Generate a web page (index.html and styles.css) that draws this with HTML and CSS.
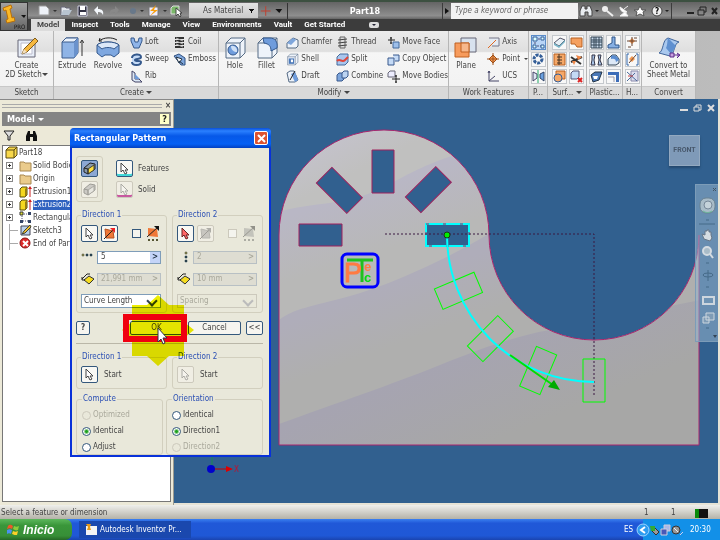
FILE: index.html
```html
<!DOCTYPE html>
<html lang="en">
<head>
    <meta charset="utf-8">
    <title>Part18</title>
    <link rel="stylesheet" href="styles.css">
</head>
<body>
    <!-- shared icons -->
    <svg class="sprite" aria-hidden="true">
        <symbol id="arrow" viewBox="0 0 17 17"><path d="M5 3v9l2-2 2 4 2-1-2-3h3z" fill="#fff" stroke="#444"/></symbol>
        <symbol id="arrow-red" viewBox="0 0 17 17"><path d="M5 3v9l2-2 2 4 2-1-2-3h3z" fill="#f66" stroke="#622"/></symbol>
        <symbol id="flip" viewBox="0 0 17 17"><path d="M4 4l8 2 1 7-8 0z" fill="#f07838" stroke="#b45020"/><path d="M3 14L12 5" stroke="#222"/><path d="M9 3h5v5z" fill="#e22"/></symbol>
        <symbol id="midplane" viewBox="0 0 17 17"><path d="M4 3l9 1 1 8-10-1z" fill="#f07838"/><path d="M3 12L14 2" stroke="#222"/><path d="M10 1h5v5z" fill="#111"/><path d="M4 15h2M8 15h2M12 15h2" stroke="#553" stroke-width="2"/></symbol>
        <symbol id="solid" viewBox="0 0 17 17"><path d="M3 8l6-5 5 1v5l-7 5-4-2z" fill="#8899aa" stroke="#222"/><path d="M7 9l6-4v5l-6 4z" fill="#ffe040" stroke="#443"/><path d="M3 8l4 1v5" fill="none" stroke="#222"/></symbol>
        <symbol id="diamond" viewBox="0 0 14 14"><path d="M3 8l5-4 5 3-5 5z" fill="#f5dc20" stroke="#333"/><path d="M1 7l5-5M1 5v3h3M6 2h3" fill="none" stroke="#222"/></symbol>
        <symbol id="cube-y" viewBox="0 0 13 13"><path d="M1 4l3-3h8v8l-3 3H1z" fill="#f8d84a" stroke="#5a4a10"/><path d="M1 4h8v8M9 4l3-3" fill="none" stroke="#5a4a10"/></symbol>
        <symbol id="folder" viewBox="0 0 13 13"><path d="M1 3h4l1 1h6v8H1z" fill="#eacb8c" stroke="#a88850"/></symbol>
        <symbol id="extrusion" viewBox="0 0 13 13"><path d="M1 4l2-2h5v8l-2 2H1z" fill="#f4d820" stroke="#554a10"/><path d="M6 4v8l2-2V2z" fill="#967e10"/><path d="M11 12V3" stroke="#c22"/><path d="M9 4l2-3 2 3z" fill="#c22"/></symbol>
        <symbol id="box" viewBox="0 0 24 24"><path d="M3 7l5-5h14v15l-5 5H3z" fill="#eef3fa" stroke="#556a84"/><path d="M3 7h14v15M17 7l5-5" fill="none" stroke="#556a84"/></symbol>
        <symbol id="cubes" viewBox="0 0 13 13"><path d="M1 5l2-2h5v6l-2 2H1z" fill="#7ea6dc" stroke="#38588c"/><path d="M6 3l2-2h4v5l-2 2H6z" fill="#bcd4f2" stroke="#38588c"/></symbol>
        <symbol id="bino" viewBox="0 0 13 13"><path d="M1 12V7l2-5h2v3h3V2h2l2 5v5H8V8H5v4z" fill="currentColor"/></symbol>
    </svg>

    <header class="top">
        <button class="app" aria-label="Application menu">
            <svg width="26" height="27" viewBox="0 0 26 27"><path d="M2 5l8-3 1 3-2 1 2 9 2-1 1 4-8 2-1-3 2-1-2-9-2 1z" fill="#fbb827" stroke="#b8700a"/><path d="M20 12h5l-2 3z" fill="#111"/><text x="13" y="26" class="pro">PRO</text></svg>
        </button>
        <div class="bars">
            <div class="titlebar">
                <svg class="qat" width="154" height="16" viewBox="0 0 154 16">
                    <path d="M7 3h7l3 3v6H7z" fill="#eef2f8" stroke="#999"/><path d="M21 7h4l-2 2z" fill="#333"/>
                    <path d="M29 4h4l1 1h4v2l-2 5h-7z" fill="#e4e8ee" stroke="#667"/><path d="M31 7h9l-3 5h-8z" fill="#b8c4d0"/>
                    <path d="M46 3h9v10h-9z" fill="#334" stroke="#ccd"/><path d="M48 3h5v4h-5zM48 9h6v3h-6z" fill="#fff"/>
                    <path d="M62 7l4-4v3c4 0 6 2 5 6-1-2-2-3-5-3v3z" fill="#f2f6fa"/>
                    <path d="M87 7l-4-4v3c-4 0-6 2-5 6 1-2 2-3 5-3v3z" fill="#888"/>
                    <circle cx="101" cy="8" r="3" fill="#68788a"/><path d="M108 7h4l-2 2z" fill="#333"/>
                    <path d="M117 4h9v9h-9z" fill="#eef" stroke="#777"/><path d="M124 2l-6 6h4l-4 5 8-6h-4z" fill="#f8a010"/><path d="M131 7h4l-2 2z" fill="#333"/>
                    <path d="M139 5l2-2h6v6l-2 2h-6z" fill="#7ab86a" stroke="#ddd"/><path d="M144 5v8l2-2 2 3 1-1-1-3h2z" fill="#fff" stroke="#444"/>
                </svg>
                <select class="material" aria-label="Material"><option>As Material</option></select>
                <svg class="plus" width="30" height="16" viewBox="0 0 30 16"><path d="M8 3v10M3 8h10" stroke="#c04030"/><path d="M18 6h7l-3 4z" fill="#111"/></svg>
                <h1>Part18</h1>
                <div class="search">
                    <svg width="8" height="16" viewBox="0 0 8 16"><path d="M2 5l4 3-4 3z" fill="#111"/></svg>
                    <input type="text" placeholder="Type a keyword or phrase" aria-label="Search">
                    <svg width="93" height="16" viewBox="0 0 93 16">
                        <path d="M2 13V8l2-5h3v3h2V3h3l2 5v5h-4V9H7v4z" fill="#e8ecf0" stroke="#444"/><path d="M17 7h4l-2 2z" fill="#222"/>
                        <circle cx="27" cy="6" r="3" fill="#eee"/><path d="M29 8l6 5" stroke="#eee" stroke-width="2"/>
                        <path d="M42 4c0 4 3 6 7 5zM42 13h8l-3-4zM46 6l4-3" fill="#fff" stroke="#eee"/>
                        <path d="M62 3l2 4h4l-3 2 1 4-4-2-4 2 1-4-3-2h4z" fill="#fff" stroke="#555"/>
                        <circle cx="79" cy="8" r="5" fill="#eee" stroke="#444"/><text x="77" y="11" class="qmark">?</text><path d="M87 7h4l-2 2z" fill="#222"/>
                    </svg>
                </div>
                <svg class="winctl" width="36" height="16" viewBox="0 0 36 16"><path d="M3 10h7" stroke="#222" stroke-width="2"/><path d="M14 7h6v5h-6zM16 7V4h6v5h-2" fill="none" stroke="#222"/><path d="M28 5l5 6M33 5l-5 6" stroke="#222" stroke-width="2"/></svg>
            </div>
            <nav class="tabs">
                <a href="#" class="active">Model</a>
                <a href="#">Inspect</a>
                <a href="#">Tools</a>
                <a href="#">Manage</a>
                <a href="#">View</a>
                <a href="#">Environments</a>
                <a href="#">Vault</a>
                <a href="#">Get Started</a>
                <svg width="10" height="8" viewBox="0 0 10 8"><rect y="1" width="10" height="6" rx="2" fill="#ddd"/><path d="M3 3h4L5 5z" fill="#223"/></svg>
            </nav>
        </div>
    </header>

    <section class="ribbon">
        <div class="group sketch">
            <div class="tools">
                <button class="big"><svg width="24" height="24" viewBox="0 0 24 24"><path d="M3 4h17v17H3z" fill="#e8eef8" stroke="#667"/><path d="M6 7h11v11H6z" fill="#fff" stroke="#bbc"/><path d="M7 18l2-5L20 2l3 3-11 11z" fill="#f6b840" stroke="#7a5a20"/><path d="M7 18l2-5 3 3z" fill="#f3e0c0"/></svg>Create<br>2D Sketch<i class="caret"></i></button>
            </div>
            <h2>Sketch</h2>
        </div>
        <div class="group create">
            <div class="tools">
                <button class="big"><svg width="24" height="24" viewBox="0 0 24 24"><path d="M2 6l4-4h12v15l-4 5H2z" fill="#8fb4e6" stroke="#3d5c8c"/><path d="M2 6l4-4h12l-4 4z" fill="#eaf2fc" stroke="#3d5c8c"/><path d="M14 6v16l4-5V2z" fill="#6a92cc"/><path d="M22 20V5M20 7l2-3 2 3" fill="none" stroke="#333"/></svg>Extrude</button>
                <button class="big"><svg width="24" height="24" viewBox="0 0 24 24"><path d="M1 9c4-4 18-4 22 0v8l-5 4-3-2H9l-3 2-5-4z" fill="#7fa8e0" stroke="#34588c"/><path d="M1 9c4-4 18-4 22 0l-5 4c-3-2-9-2-12 0z" fill="#dce8f8" stroke="#34588c"/><path d="M3 5c5-4 13-4 18-1M3 5l1-3M3 5h3" fill="none" stroke="#222"/></svg>Revolve</button>
                <ul>
                    <li><button><svg width="13" height="13" viewBox="0 0 13 13"><path d="M1 2h3l1 4h3l1-4h3v3L9 12H4L1 5z" fill="#8fb4e8" stroke="#34588c"/></svg>Loft</button></li>
                    <li><button><svg width="13" height="13" viewBox="0 0 13 13"><path d="M2 5c0-4 9-5 9-1 0 3-6 1-6 3s6 0 6 2c0 4-9 4-9 0" fill="#c4daf6" stroke="#34588c" stroke-width="2"/></svg>Sweep</button></li>
                    <li><button><svg width="13" height="13" viewBox="0 0 13 13"><path d="M2 1v9l3 2h7l-3-3H5V3z" fill="#dce8f6" stroke="#446"/><path d="M5 4l5 5H5z" fill="#6e9ad8"/></svg>Rib</button></li>
                </ul>
                <ul>
                    <li><button><svg width="13" height="13" viewBox="0 0 13 13"><path d="M2 2h9M2 5h9M2 8h9M2 11h9" stroke="#333" stroke-width="2"/><path d="M3 2l7 3M3 5l7 3M3 8l7 3" stroke="#bbb"/></svg>Coil</button></li>
                    <li><button><svg width="13" height="13" viewBox="0 0 13 13"><path d="M1 3l5-2 6 4v7H8z" fill="#7ea6dc" stroke="#2f5080"/><path d="M3 4l6 2-3 4zM6 8l4 3" fill="#fff" stroke="#234"/></svg>Emboss</button></li>
                </ul>
            </div>
            <h2>Create <i class="caret"></i></h2>
        </div>
        <div class="group modify">
            <div class="tools">
                <button class="big"><svg width="24" height="24" viewBox="0 0 24 24"><use href="#box"/><circle cx="10" cy="14" r="5" fill="#6f9cdc" stroke="#34588c"/><path d="M8 10a5 5 0 0 1 6 6c-3 0-6-2-6-6z" fill="#cfe0f6"/></svg>Hole</button>
                <button class="big"><svg width="24" height="24" viewBox="0 0 24 24"><use href="#box"/><path d="M8 2h7c5 0 8 4 7 10l-6 3c0-5-2-7-7-8z" fill="#6f9cdc" stroke="#34588c"/></svg>Fillet</button>
                <ul>
                    <li><button><svg width="13" height="13" viewBox="0 0 13 13"><path d="M1 7l6-5 5 2v6l-2 2H1z" fill="#eef3fa" stroke="#556a84"/><path d="M1 7l6-5 3 2-5 5z" fill="#7ea6dc"/></svg>Chamfer</button></li>
                    <li><button><svg width="13" height="13" viewBox="0 0 24 24"><use href="#box"/><path d="M5 10h10v10H5z" fill="#4a78b8"/><path d="M9 12h4v5H9z" fill="#fff"/></svg>Shell</button></li>
                    <li><button><svg width="13" height="13" viewBox="0 0 13 13"><path d="M1 3l3-2h4l4 9-3 2H3z" fill="#eef3fa" stroke="#556a84"/><path d="M5 4l4-2 3 8-3 2z" fill="#6f9cdc"/><path d="M4 10l5-9" stroke="#222"/></svg>Draft</button></li>
                </ul>
                <ul>
                    <li><button><svg width="13" height="13" viewBox="0 0 13 13"><path d="M4 1h5v11H4z" fill="#ddd" stroke="#666"/><path d="M2 4l9-1M2 7l9-1M2 10l9-1" stroke="#444"/></svg>Thread</button></li>
                    <li><button><svg width="13" height="13" viewBox="0 0 13 13"><path d="M1 4l3-3h8v8l-3 3H1z" fill="#a9c6ee" stroke="#446a9c"/><path d="M1 8c3-3 5 2 8-1l3-3" fill="none" stroke="#e0453a" stroke-width="2"/></svg>Split</button></li>
                    <li><button><svg width="13" height="13"><use href="#cubes"/></svg>Combine</button></li>
                </ul>
                <ul>
                    <li><button><svg width="13" height="13" viewBox="0 0 13 13"><path d="M6 6h6v6H6z" fill="#9dbfea" stroke="#446a9c"/><path d="M4 1v7M1 4h7M3 2h2M3 7h2" stroke="#222"/></svg>Move Face</button></li>
                    <li><button><svg width="13" height="13" viewBox="0 0 13 13"><path d="M1 5h6v7H1zM6 2h6v6H8" fill="#c4daf6" stroke="#38588c"/></svg>Copy Object</button></li>
                    <li><button><svg width="13" height="13" viewBox="0 0 13 13"><path d="M1 3l2-2h5v6H1z" fill="#eef" stroke="#667"/><path d="M9 5v8M5 9h8M8 6h2M8 12h2" stroke="#222"/></svg>Move Bodies</button></li>
                </ul>
            </div>
            <h2>Modify <i class="caret"></i></h2>
        </div>
        <div class="group work">
            <div class="tools">
                <button class="big"><svg width="24" height="24" viewBox="0 0 24 24"><path d="M7 2h15v14H7z" fill="#d8e2ee" stroke="#667"/><path d="M1 7h14v14H1z" fill="#f79b5c" stroke="#c06020"/><path d="M7 7h8v9H7z" fill="#f7b88c" stroke="#c06020"/></svg>Plane</button>
                <ul>
                    <li><button><svg width="13" height="13" viewBox="0 0 13 13"><path d="M2 2h10v8H5" fill="#e4eaf2" stroke="#778"/><path d="M1 12l8-8" stroke="#e06820"/></svg>Axis</button></li>
                    <li><button><svg width="13" height="13" viewBox="0 0 13 13"><path d="M6 2l4 4-4 4-4-4z" fill="#f49a54" stroke="#a05018"/><path d="M6 0v12M0 6h12" stroke="#a05018"/></svg>Point <i class="caret"></i></button></li>
                    <li><button><svg width="13" height="13" viewBox="0 0 13 13"><path d="M2 1v10h10M2 11l6-5M1 3l1-2 1 2" fill="none" stroke="#446"/></svg>UCS</button></li>
                </ul>
            </div>
            <h2>Work Features</h2>
        </div>
        <div class="group grid1">
            <div class="tools tiles">
                <button class="on" aria-label="Rectangular pattern"><svg width="13" height="13" viewBox="0 0 13 13"><path d="M3 3h8M3 3v7h7" fill="none" stroke="#557" stroke-dasharray="2 1"/><path d="M1 1h4v4H1zM9 1h3v3H9zM1 9h3v3H1zM9 9h3v3H9z" fill="#dff" stroke="#345e98"/></svg></button>
                <button aria-label="Circular pattern"><svg width="13" height="13" viewBox="0 0 13 13"><circle cx="6" cy="6" r="4" fill="none" stroke="#345e98" stroke-width="3" stroke-dasharray="3 1"/></svg></button>
                <button aria-label="Mirror"><svg width="13" height="13" viewBox="0 0 13 13"><path d="M1 2l4 2v4l-4 3z" fill="#dde6f2" stroke="#446"/><path d="M12 2L8 4v4l4 3z" fill="#6aa0e0" stroke="#346"/><path d="M6 0v13" stroke="#2a6"/></svg></button>
            </div>
            <h2>P...</h2>
        </div>
        <div class="group grid2 surf">
            <div class="tools tiles">
                <button aria-label="Thicken"><svg width="13" height="13" viewBox="0 0 13 13"><path d="M1 7l6-5 5 2-6 6z" fill="#e8f0f6" stroke="#556"/><path d="M1 7v2l5 3 6-6V4l-6 6z" fill="#78b4c8"/></svg></button>
                <button aria-label="Patch"><svg width="13" height="13" viewBox="0 0 13 13"><path d="M1 2h11v9H7L5 8H1z" fill="#f5a060" stroke="#b86020"/></svg></button>
                <button aria-label="Stitch"><svg width="13" height="13" viewBox="0 0 13 13"><path d="M1 1h11v11H1z" fill="#f5a868" stroke="#b86020"/><path d="M6 1v11M4 4h5M4 7h5M4 10h5" stroke="#432"/></svg></button>
                <button aria-label="Trim"><svg width="13" height="13" viewBox="0 0 13 13"><path d="M1 4l10 7M1 9l11-5" stroke="#333" stroke-width="2"/><path d="M6 2l6 2-4 3zM2 8l4 0-2 4z" fill="#f08848"/></svg></button>
                <button aria-label="Sculpt"><svg width="13" height="13" viewBox="0 0 13 13"><path d="M3 1h9v8H3z" fill="#f5a868" stroke="#b86020"/><circle cx="5" cy="8" r="4" fill="#f5a868" stroke="#345e98"/></svg></button>
                <button aria-label="Delete face"><svg width="13" height="13" viewBox="0 0 13 13"><path d="M1 3l2-2h6v6l-2 2H1z" fill="#c4daf6" stroke="#557"/><path d="M8 8l4 4M12 8l-4 4" stroke="#d22" stroke-width="2"/></svg></button>
            </div>
            <h2>Surf... <i class="caret"></i></h2>
        </div>
        <div class="group grid2 plastic">
            <div class="tools tiles">
                <button aria-label="Grill"><svg width="13" height="13" viewBox="0 0 13 13"><path d="M1 1h11v11H1zM1 4h11M1 6h11M1 9h11M4 1v11M6 1v11M9 1v11" fill="#cde" stroke="#345"/></svg></button>
                <button aria-label="Boss"><svg width="13" height="13" viewBox="0 0 13 13"><path d="M5 1h3v8h4v3H1V9l4-2z" fill="#88b0e4" stroke="#2f5488"/></svg></button>
                <button aria-label="Snap fit"><svg width="13" height="13" viewBox="0 0 13 13"><path d="M2 2h3l-1 5 1 5H1l1-5zM8 2h3l-1 5 2 5H8l1-5z" fill="#a8c4e8" stroke="#334"/></svg></button>
                <button aria-label="Rule fillet"><svg width="13" height="13" viewBox="0 0 13 13"><path d="M1 6l4-4h4l3 4v4l-3 2H1z" fill="#dde8f6" stroke="#345"/><path d="M4 3c4-2 7 1 8 4L9 9C9 6 7 5 4 6z" fill="#5a8cd0"/></svg></button>
                <button aria-label="Rest"><svg width="13" height="13" viewBox="0 0 13 13"><path d="M1 5l4-3h7l-3 8-6 2z" fill="#4a78b8" stroke="#234"/><path d="M3 6h5l-1 3H4z" fill="#fff"/></svg></button>
                <button aria-label="Lip"><svg width="13" height="13" viewBox="0 0 13 13"><path d="M1 2h11v10H9V5H1z" fill="#3c6cb8"/><path d="M1 7h6v5" fill="none" stroke="#99a"/></svg></button>
            </div>
            <h2>Plastic...</h2>
        </div>
        <div class="group grid1">
            <div class="tools tiles">
                <button aria-label="Pin"><svg width="13" height="13" viewBox="0 0 13 13"><path d="M6 2l3 3-3 3-3-3z" fill="#f49a54"/><path d="M6 1v9M1 5h10M2 11h3M8 2h3" stroke="#643"/></svg></button>
                <button aria-label="Pin group"><svg width="13" height="13" viewBox="0 0 13 13"><path d="M3 1H1v11h2M10 1h2v11h-2" fill="none" stroke="#36a"/><path d="M6 3l3 3-3 3-3-3z" fill="#f49a54"/><path d="M3 10l7-8" stroke="#643"/></svg></button>
                <button aria-label="Properties"><svg width="13" height="13" viewBox="0 0 13 13"><path d="M5 1h7v10H5z" fill="#dde" stroke="#88a"/><path d="M1 2l10 9M1 11l8-8" stroke="#4a6a9a"/><path d="M2 6h5" stroke="#c44"/></svg></button>
            </div>
            <h2>H...</h2>
        </div>
        <div class="group convert">
            <div class="tools">
                <button class="big"><svg width="24" height="24" viewBox="0 0 24 24"><path d="M2 17C7 15 5 4 11 2l11 4c-5 1-4 11-9 14z" fill="#a9c8ee" stroke="#41669c"/><path d="M9 12c2-4 1-8 2-10l8 8-5 8z" fill="#5f90d0"/><path d="M13 17h4v4h-4zM17 19h5M20 17l3 2-3 3" fill="#c8a0e0" stroke="#5a2a88"/></svg>Convert to<br>Sheet Metal</button>
            </div>
            <h2>Convert</h2>
        </div>
    </section>

    <main class="work-area">
        <aside class="browser">
            <div class="grip"><span></span><b>×</b></div>
            <div class="panel-title">Model <i class="caret"></i><button class="help" aria-label="Help">?</button></div>
            <div class="filters">
                <svg width="13" height="13" viewBox="0 0 13 13"><path d="M1 2h10L7 7v4H5V7z" fill="#ddd" stroke="#222"/></svg>
                <svg width="13" height="13"><use href="#bino"/></svg>
            </div>
            <ul class="tree">
                <li class="root"><svg width="13" height="13"><use href="#cube-y"/></svg>Part18</li>
                <li><i class="exp"></i><svg width="13" height="13"><use href="#folder"/></svg>Solid Bodies</li>
                <li><i class="exp"></i><svg width="13" height="13"><use href="#folder"/></svg>Origin</li>
                <li><i class="exp"></i><svg width="13" height="13"><use href="#extrusion"/></svg>Extrusion1</li>
                <li><i class="exp"></i><svg width="13" height="13"><use href="#extrusion"/></svg><mark>Extrusion2</mark></li>
                <li><i class="exp"></i><svg width="13" height="13" viewBox="0 0 13 13"><path d="M3 3h7M3 3v7h7" fill="none" stroke="#557" stroke-dasharray="1 1"/><path d="M1 1h3v3H1z" fill="#dd3" stroke="#333"/><path d="M9 1h3v3H9zM1 9h3v3H1zM9 9h3v3H9z" fill="#346"/></svg>Rectangular</li>
                <li><i class="leaf"></i><svg width="13" height="13" viewBox="0 0 13 13"><path d="M2 2h9v9H2z" fill="#b8d0ec" stroke="#445"/><path d="M3 10l2-3 6-6 1 2-6 6z" fill="#f0c030" stroke="#443"/></svg>Sketch3</li>
                <li><i class="leaf"></i><svg width="13" height="13" viewBox="0 0 13 13"><circle cx="6" cy="6" r="5" fill="#dd2a2a" stroke="#811"/><path d="M4 4l5 5M9 4L4 9" stroke="#fff" stroke-width="2"/></svg>End of Part</li>
            </ul>
        </aside>

        <div class="view">
            <svg class="model" viewBox="174 99 544 404" preserveAspectRatio="xMinYMin meet">
                <defs>
                    <clipPath id="body"><path d="M279 445V235A105 105 0 0 1 489 235A105 105 0 0 0 699 235V445Z"/></clipPath>
                    <path id="slot" d="M-21 -11h43v22h-43z"/>
                    <!-- soft reflections across the face -->
                    <linearGradient id="shade0" gradientUnits="userSpaceOnUse" x1="340" y1="130" x2="360" y2="170"><stop offset="0" stop-color="#c4c2cc"/><stop offset="1" stop-color="#c0c0bf"/></linearGradient>
                    <linearGradient id="shade1" gradientUnits="userSpaceOnUse" x1="380" y1="185" x2="400" y2="245"><stop offset="0" stop-color="#b9b7c5"/><stop offset="1" stop-color="#b8b8b7"/></linearGradient>
                    <linearGradient id="shade2" gradientUnits="userSpaceOnUse" x1="390" y1="285" x2="410" y2="340"><stop offset="0" stop-color="#afadba"/><stop offset="1" stop-color="#afafae"/></linearGradient>
                    <linearGradient id="shade3" gradientUnits="userSpaceOnUse" x1="450" y1="360" x2="485" y2="445"><stop offset="0" stop-color="#a6a4b1"/><stop offset="1" stop-color="#a7a7a6"/></linearGradient>
                </defs>
                <g clip-path="url(#body)">
                    <path d="M270 100h440v350H270z" fill="url(#shade0)"/>
                    <path d="M279 212C310 202 350 206 388 185S440 160 452 156L500 140H700V450H279Z" fill="url(#shade1)"/>
                    <path d="M279 320C295 308 310 307 350 296S450 258 495 230L700 220V450H279Z" fill="url(#shade2)"/>
                    <path d="M279 424C340 402 390 385 440 365S520 335 550 330L700 300V450H279Z" fill="url(#shade3)"/>
                </g>
                <path d="M279 445V235A105 105 0 0 1 489 235A105 105 0 0 0 699 235V445Z" fill="none" stroke="#a8246c"/>
                <g fill="#31608f" stroke="#a0205c">
                    <use href="#slot" transform="translate(320 235)"/>
                    <use href="#slot" transform="translate(339 190) rotate(45)"/>
                    <use href="#slot" transform="translate(383 171) rotate(90)"/>
                    <use href="#slot" transform="translate(428 190) rotate(-45)"/>
                </g>
                <use href="#slot" transform="translate(447 235)" fill="#31608f" stroke="#0ff" stroke-width="2"/>
                <use href="#slot" transform="translate(447 235)" fill="none" stroke="#a0205c" stroke-dasharray="3 14"/>
                <path d="M385 234H594V396" fill="none" stroke="#3a1840" stroke-dasharray="2 2"/>
                <g fill="none" stroke="#0f0">
                    <use href="#slot" transform="translate(458 291) rotate(-23)"/>
                    <use href="#slot" transform="translate(490 339) rotate(-45)"/>
                    <use href="#slot" transform="translate(538 371) rotate(-67)"/>
                    <use href="#slot" transform="translate(594 381) rotate(-90)"/>
                </g>
                <path d="M447 235A147 147 0 0 0 594 382" fill="none" stroke="#0ff" stroke-width="2"/>
                <path d="M510 355L553 385" stroke="#0d0" stroke-width="2"/><path d="M560 390l-12-3 6-7z" fill="#0a0"/>
                <circle cx="447" cy="235" r="3" fill="#0e0" stroke="#163816"/>
                <rect x="342" y="254" width="36" height="33" rx="5" fill="#b9b9bb" stroke="#00f" stroke-width="3"/>
                <path d="M347 260h26M362 260v22" stroke="#1fc01f" stroke-width="3"/>
                <text x="344" y="282" class="logo-p">P</text><text x="364" y="271" class="logo-e">e</text><text x="364" y="282" class="logo-c">c</text>
                <path d="M212 457v12" stroke="#188a50"/><path d="M212 469h15" stroke="#c00"/><path d="M226 466l7 3-7 3z" fill="#d00"/><circle cx="211" cy="469" r="4" fill="#00c"/><text x="234" y="472" class="axis">X</text>
            </svg>
            <svg class="viewctl" width="38" height="10" viewBox="0 0 38 10"><path d="M2 7h8" stroke="#ddd" stroke-width="2"/><path d="M16 4h5v4h-5zM18 4V2h5v5h-2" fill="none" stroke="#ddd"/><path d="M30 2l6 6M36 2l-6 6" stroke="#ddd" stroke-width="2"/></svg>
            <div class="cube">FRONT</div>
            <div class="navbar">
                <svg width="22" height="156" viewBox="0 0 22 156">
                    <path d="M17 3l3 3M20 3l-3 3" stroke="#456"/>
                    <rect x="4" y="13" width="15" height="15" rx="6" fill="#a9bcc8" stroke="#6a8292"/><circle cx="12" cy="20" r="4" fill="#c4d2da" stroke="#789"/><path d="M7 26c3 2 6 2 9 0" stroke="#6b9" fill="none"/>
                    <path d="M10 35h3M3 39h16M10 78h3M10 102h3M10 143h3" stroke="#456a88"/>
                    <path d="M8 54l-2-5 3 1v-4h2v-1h2v2h2v3l1 3-2 3z" fill="#d4dce2" stroke="#678"/>
                    <circle cx="11" cy="66" r="4" fill="#a9bcc8" stroke="#d4dce2" stroke-width="2"/><path d="M14 69l3 4" stroke="#d4dce2" stroke-width="2"/>
                    <ellipse cx="12" cy="90" rx="5" ry="2" fill="none" stroke="#456a88"/><path d="M12 85v11" stroke="#456a88"/>
                    <path d="M7 112h11v7H7z" fill="#6f94b4" stroke="#ccd6de" stroke-width="2"/>
                    <path d="M10 128h8v7h-8zM7 132h6v6H7z" fill="#7f9cb6" stroke="#ccd6de"/>
                    <path d="M17 150h4l-2 3z" fill="#345"/>
                </svg>
            </div>
        </div>

        <form class="dialog" action="#">
            <h3>Rectangular Pattern<button type="button" class="close" aria-label="Close"><svg width="9" height="9" viewBox="0 0 9 9"><path d="M1 1l7 7M8 1L1 8" stroke="#fff" stroke-width="2"/></svg></button></h3>
            <div class="content">
                <div class="kind">
                    <div class="kind-box">
                        <button type="button" class="pick pressed" aria-label="Pattern features"><svg width="17" height="17"><use href="#solid"/></svg></button>
                        <button type="button" class="pick off" aria-label="Pattern solid"><svg width="17" height="17"><use href="#solid"/></svg></button>
                    </div>
                    <div class="kind-list">
                        <div><button type="button" id="features" class="pick cyan"><svg width="17" height="17"><use href="#arrow"/></svg></button><label for="features">Features</label></div>
                        <div><button type="button" id="solidpick" class="pick pink off"><svg width="17" height="17"><use href="#arrow"/></svg></button><label for="solidpick">Solid</label></div>
                    </div>
                </div>
                <div class="cols">
                    <fieldset>
                        <legend>Direction 1</legend>
                        <div class="row picks"><button type="button" class="pick" aria-label="Path"><svg width="17" height="17"><use href="#arrow"/></svg></button><button type="button" class="pick" aria-label="Flip"><svg width="17" height="17"><use href="#flip"/></svg></button><input type="checkbox" aria-label="Midplane"><svg width="17" height="17"><use href="#midplane"/></svg></div>
                        <div class="row"><svg width="14" height="14" viewBox="0 0 14 14"><circle cx="2" cy="5" r="1" fill="#cc2" stroke="#554"/><circle cx="6" cy="5" r="1" stroke="#245"/><circle cx="10" cy="5" r="1" stroke="#245"/></svg><span class="spin"><input type="text" value="5" aria-label="Count"><button type="button">&gt;</button></span></div>
                        <div class="row"><svg width="14" height="14"><use href="#diamond"/></svg><span class="spin off"><input type="text" value="21,991 mm" aria-label="Length" disabled><button type="button" disabled>&gt;</button></span></div>
                        <div class="combo"><select aria-label="Spacing type"><option>Curve Length</option></select></div>
                    </fieldset>
                    <fieldset>
                        <legend>Direction 2</legend>
                        <div class="row picks"><button type="button" class="pick" aria-label="Path"><svg width="17" height="17"><use href="#arrow-red"/></svg></button><button type="button" class="pick off" aria-label="Flip"><svg width="17" height="17"><use href="#flip"/></svg></button><input type="checkbox" aria-label="Midplane" disabled><svg class="dim" width="17" height="17"><use href="#midplane"/></svg></div>
                        <div class="row"><svg width="14" height="14" viewBox="0 0 14 14"><circle cx="9" cy="3" r="1" fill="#cc2" stroke="#554"/><circle cx="9" cy="7" r="1" stroke="#245"/><circle cx="9" cy="11" r="1" stroke="#245"/></svg><span class="spin off"><input type="text" value="2" aria-label="Count" disabled><button type="button" disabled>&gt;</button></span></div>
                        <div class="row"><svg width="14" height="14"><use href="#diamond"/></svg><span class="spin off"><input type="text" value="10 mm" aria-label="Spacing" disabled><button type="button" disabled>&gt;</button></span></div>
                        <div class="combo off"><select aria-label="Spacing type" disabled><option>Spacing</option></select></div>
                    </fieldset>
                </div>
                <div class="actions">
                    <button type="button" class="ask" aria-label="Help">?</button>
                    <button type="button" class="wide ok">OK</button>
                    <button type="button" class="wide">Cancel</button>
                    <button type="button" class="less">&lt;&lt;</button>
                </div>
                <div class="cols start-from">
                    <fieldset>
                        <legend>Direction 1</legend>
                        <div class="row"><button type="button" id="start1" class="pick"><svg width="17" height="17"><use href="#arrow"/></svg></button><label for="start1">Start</label></div>
                    </fieldset>
                    <fieldset>
                        <legend>Direction 2</legend>
                        <div class="row"><button type="button" id="start2" class="pick off"><svg width="17" height="17"><use href="#arrow"/></svg></button><label for="start2">Start</label></div>
                    </fieldset>
                </div>
                <div class="cols radios">
                    <fieldset>
                        <legend>Compute</legend>
                        <label class="off"><input type="radio" name="compute" disabled>Optimized</label>
                        <label><input type="radio" name="compute" checked>Identical</label>
                        <label><input type="radio" name="compute">Adjust</label>
                    </fieldset>
                    <fieldset>
                        <legend>Orientation</legend>
                        <label><input type="radio" name="orient">Identical</label>
                        <label><input type="radio" name="orient" checked>Direction1</label>
                        <label class="off"><input type="radio" name="orient" disabled>Direction2</label>
                    </fieldset>
                </div>
            </div>
            <!-- click highlight over the OK button -->
            <svg class="glow" width="76" height="74" viewBox="0 0 76 74"><path d="M12 11h15l11-10 11 10h15v17l10 8-10 8v18H49L38 72 27 62H12V44L2 36l10-8z" fill="#ee0"/></svg>
            <svg class="mark-ok" width="66" height="40" viewBox="0 0 66 40"><path d="M4 4h58v22H4z" fill="none" stroke="#f00010" stroke-width="6"/><path d="M36 15v14l3-3 2 5 2-1-2-5h4z" fill="#fff" stroke="#334"/></svg>
        </form>
    </main>

    <footer class="status"><span>Select a feature or dimension</span><span class="num">1</span><span class="num">1</span><i class="meter"></i></footer>

    <div class="taskbar">
        <button class="start"><svg width="13" height="13" viewBox="0 0 13 13"><path d="M1 3c2-2 3-1 5 0L5 6C4 5 2 5 0 6z" fill="#f0562a"/><path d="M7 3c2 1 3 1 5 0l-1 4c-2 1-3 0-5-1z" fill="#8ccc3a"/><path d="M0 7c2-1 3-1 5 0l-1 4c-1-1-3-1-4 0z" fill="#4a90f0"/><path d="M6 8c2 1 3 1 5 0l-1 4c-2 0-3 0-5-1z" fill="#fcd028"/></svg>Inicio</button>
        <button class="task"><svg width="13" height="13" viewBox="0 0 13 13"><path d="M1 3h11v9H1z" fill="#f4f4f4"/><path d="M1 1h5L5 4l1 3H2l1-3z" fill="#e89a18"/></svg>Autodesk Inventor Pr...</button>
        <span class="lang">ES</span>
        <div class="tray">
            <svg width="47" height="18" viewBox="0 0 47 18"><circle cx="7" cy="9" r="6" fill="#2d9cf0" stroke="#9cd4ff"/><path d="M9 6L5 9l4 3" fill="none" stroke="#fff" stroke-width="2"/><path d="M16 6l3 1 4 4-3 3-4-4z" fill="#999" stroke="#333"/><path d="M14 5h5v5h-4z" fill="#3a3"/><path d="M28 4h6v6h-6z" fill="#a8b8e8" stroke="#ccd"/><path d="M25 8h6v6h-6z" fill="#4858b8" stroke="#ccd"/><circle cx="40" cy="9" r="4" fill="#999" stroke="#333"/><path d="M38 7l4 4" stroke="#eee"/><path d="M44 14l3-3" stroke="#cce"/></svg>
            <time>20:30</time>
        </div>
    </div>
</body>
</html>
```

FILE: styles.css
```css
* {
    box-sizing: border-box;
}
body {
    margin: 0;
    height: 100vh;
    display: flex;
    flex-direction: column;
    overflow: hidden;
    font: 8px/10px "DejaVu Sans Condensed", "DejaVu Sans", sans-serif;
    color: #444;
    background: #ece9d8;
}
button, input, select {
    font: inherit;
    color: inherit;
    margin: 0;
    padding: 0;
    border: 0;
    background: none;
}
ul, h1, h2, h3, fieldset {
    margin: 0;
    padding: 0;
    list-style: none;
    font: inherit;
}
svg {
    display: block;
    flex: none;
}
.sprite {
    position: absolute;
    width: 0;
    height: 0;
}
.caret {
    display: inline-block;
    border: 3px solid transparent;
    border-top-color: currentColor;
    border-bottom: 0;
    vertical-align: middle;
}

/* title bar and tabs */
.top {
    display: flex;
    border-top: 2px solid #3c5040;
    background: #3c3c3c;
}
.app {
    width: 28px;
    background: linear-gradient(#a2a2a2, #666);
    border: 1px solid #333;
}
.pro {
    font: 6px "DejaVu Sans Condensed";
    fill: #111;
}
.bars {
    flex: 1;
    min-width: 0;
}
.titlebar {
    display: flex;
    align-items: center;
    height: 17px;
    background: linear-gradient(#646464, #8e8e8e 80%, #666);
}
.qat {
    margin: 0 3px 0 4px;
}
.material {
    width: 69px;
    height: 15px;
    padding: 0 14px;
    appearance: none;
    background: conic-gradient(from -30deg at 50% 100%, #111 60deg, transparent 0) 60px 6px / 5px 4px no-repeat, linear-gradient(#e2e2e2, #cacaca);
}
.plus {
    border-right: 1px solid #333;
}
.titlebar h1 {
    flex: 1;
    text-align: center;
    font: bold 9px "DejaVu Sans Condensed";
    color: #fff;
}
.search {
    display: flex;
    border: solid #3c3c3c;
    border-width: 0 1px;
}
.search input {
    width: 127px;
    padding: 0 4px;
    background: #f2f2f2;
    font-style: italic;
}
.search input::placeholder {
    color: #666;
    opacity: 1;
}
.qmark {
    font: bold 8px "DejaVu Sans Condensed";
}
.winctl {
    margin-left: 12px;
}
.tabs {
    display: flex;
    align-items: center;
    height: 12px;
    margin-left: 3px;
    font: bold 8px Roboto, sans-serif;
}
.tabs a {
    padding: 0 6px;
    line-height: 12px;
    color: #fff;
    text-decoration: none;
}
.tabs a.active {
    background: #dcdcdc;
    color: #444;
}
.tabs svg {
    margin-left: 18px;
}

/* ribbon */
.ribbon {
    display: flex;
    height: 68px;
    background: linear-gradient(90deg, #a6a6a6, #bcbcbc);
}
.group {
    display: flex;
    flex-direction: column;
    border-right: 1px solid #b6b6b6;
    background: linear-gradient(#ececec, #dfdfdf 30%, #f6f6f6 32%, #f1f1f1);
    white-space: nowrap;
}
.group h2 {
    height: 13px;
    line-height: 12px;
    text-align: center;
    background: #d9d9d9;
    border-top: 1px solid #c8c8c8;
}
.tools {
    flex: 1;
    display: flex;
    padding-top: 4px;
}
.sketch { width: 54px; }
.create { width: 165px; }
.modify { width: 230px; }
.work { width: 80px; }
.grid1 { width: 19px; }
.surf { width: 39px; }
.plastic { width: 36px; }
.convert { width: 54px; }
.big {
    width: 36px;
    padding-top: 1px;
    line-height: 9px;
    display: block;
    align-self: flex-start;
}
.big svg {
    margin: 0 auto 1px;
    width: 24px;
    height: 24px;
}
.sketch .big, .convert .big {
    width: 100%;
}
.modify .big {
    width: 34px;
}
.tools ul {
    padding-left: 4px;
}
.tools li {
    height: 17px;
}
.tools li button {
    display: flex;
    align-items: center;
    gap: 2px;
    height: 14px;
}
.tools li .caret {
    border-width: 2px;
    border-bottom: 0;
    margin-left: 2px;
}
.work .big {
    width: 35px;
}
.tiles {
    flex-wrap: wrap;
    align-content: flex-start;
    justify-content: center;
    gap: 2px;
}
.tiles button {
    width: 15px;
    height: 15px;
    border: 1px solid #c4c8cc;
    background: #f8f8f8;
}
.tiles .on {
    background: #b8d4f6;
    border-color: #5a8cc8;
}
.grid2 .tiles {
    padding-left: 1px;
}

/* model browser */
.work-area {
    position: relative;
    flex: 1;
    min-height: 0;
    display: flex;
}
.browser {
    width: 174px;
    padding: 0 2px 3px 2px;
    display: flex;
    flex-direction: column;
    border-right: 1px solid #9a9a90;
    border-top: 1px solid #888;
}
.grip {
    display: flex;
    align-items: center;
    gap: 3px;
    height: 12px;
}
.grip span {
    flex: 1;
    height: 4px;
    border: solid #aaa;
    border-width: 1px 0;
}
.panel-title {
    display: flex;
    align-items: center;
    gap: 3px;
    height: 14px;
    padding: 0 2px 0 5px;
    background: #848484;
    color: #fff;
    font-size: 9px;
    font-weight: bold;
}
.help {
    margin-left: auto;
    width: 9px;
    height: 10px;
    line-height: 9px;
    background: #ffffc8;
    color: #222;
}
.filters {
    display: flex;
    gap: 9px;
    padding: 3px 1px;
    color: #111;
}
.tree {
    flex: 1;
    background: #fff;
    border: 1px solid #777;
    overflow: hidden;
}
.tree li {
    display: flex;
    align-items: center;
    gap: 1px;
    height: 13px;
    padding-left: 3px;
    white-space: nowrap;
}
.tree .root {
    padding-left: 2px;
}
.exp {
    width: 7px;
    height: 7px;
    margin-right: 5px;
    border: 1px solid #888;
    background: linear-gradient(#333, #333) center / 3px 1px no-repeat, linear-gradient(#333, #333) center / 1px 3px no-repeat, #fff;
}
.leaf {
    width: 9px;
    height: 13px;
    margin: 0 0 0 3px;
    border-left: 1px solid #aaa;
    background: linear-gradient(#aaa, #aaa) center / 100% 1px no-repeat;
}
.tree mark {
    background: #2f62c0;
    color: #fff;
}

/* graphics window */
.view {
    position: relative;
    flex: 1;
    min-width: 0;
    background: #31608f;
    border: solid #e6e3d6;
    border-width: 0 2px 2px 0;
}
.model {
    width: 100%;
    height: 100%;
}
.logo-p {
    font: 27px "Liberation Sans";
    fill: #ff7b42;
    stroke: #ff7b42;
}
.logo-e {
    font: bold 13px/1 "Liberation Sans";
    fill: #ff7b42;
}
.logo-c {
    font: bold 13px/1 "Liberation Sans";
    fill: #0d1;
}
.axis {
    font: 8px "DejaVu Sans Condensed";
    fill: #c01030;
}
.viewctl {
    position: absolute;
    top: 4px;
    right: 2px;
}
.cube {
    position: absolute;
    top: 36px;
    right: 18px;
    width: 31px;
    height: 31px;
    text-align: center;
    background: #7f9ab8;
    border: 1px solid #93a9c0;
    box-shadow: 0 2px 2px #24486e;
    color: #48586c;
    font: bold 7px/29px Roboto, sans-serif;
}
.navbar {
    position: absolute;
    top: 85px;
    right: 0;
    background: rgba(150, 180, 205, .55);
    border: 1px solid #7c9cb8;
    border-right: 0;
}

/* pattern dialog */
.dialog {
    position: absolute;
    left: 70px;
    top: 29px;
    width: 201px;
    border: solid #0831d9;
    border-width: 0 2px 2px;
    border-radius: 5px 5px 0 0;
    background: #e9e8da;
}
.dialog h3 {
    display: flex;
    align-items: center;
    justify-content: space-between;
    height: 20px;
    margin: 0 -2px;
    padding: 0 3px 0 4px;
    border-radius: 4px 4px 0 0;
    background: linear-gradient(#0a50d8, #2a80ff 15%, #0658e8 40%, #0560f4 80%, #0340c0);
    color: #fff;
    font-weight: bold;
    font-size: 9px;
}
.close {
    display: flex;
    align-items: center;
    justify-content: center;
    width: 14px;
    height: 14px;
    border: 1px solid #fff;
    border-radius: 2px;
    background: #dd5330;
}
.content {
    padding: 8px 6px 0 4px;
}
.kind {
    display: flex;
    gap: 13px;
    margin-bottom: 8px;
}
.kind-box {
    display: grid;
    gap: 4px;
    padding: 3px 4px;
    border: 1px solid #d2cfbe;
    border-radius: 3px;
}
.kind-list {
    display: grid;
    gap: 4px;
    padding: 4px 0;
}
.kind-list div, .row {
    display: flex;
    align-items: center;
    gap: 5px;
}
.pick {
    width: 17px;
    height: 17px;
    border: 1px solid #34587c;
    border-radius: 2px;
    background: #f8f8f4;
}
.pick svg {
    margin: -1px;
}
.pressed {
    background: #8ca8d4;
}
.pick.off {
    border-color: #ccc9bc;
    background: #f0eee4;
}
.pick.off svg, .dim {
    opacity: .4;
    filter: grayscale(1);
}
.cyan {
    box-shadow: inset 0 -2px #40d8d8;
}
.pink {
    box-shadow: inset 0 -2px #c858a0;
}
.cols {
    display: grid;
    grid-template-columns: repeat(2, minmax(0, 1fr));
    gap: 5px;
}
.dialog fieldset {
    min-width: 0;
    display: grid;
    grid-template-columns: minmax(0, 1fr);
    gap: 8px;
    padding: 5px 5px 4px 4px;
    border: 1px solid #d2cfbe;
    border-radius: 3px;
}
.dialog legend {
    padding: 0 1px;
    color: #2c50b4;
}
.row {
    gap: 2px;
    height: 14px;
}
.row.picks {
    height: 17px;
    gap: 3px;
}
input[type=checkbox] {
    appearance: none;
    width: 9px;
    height: 9px;
    margin-left: auto;
    border: 1px solid #34587c;
    background: #f4f4ee;
}
input[type=checkbox]:disabled {
    border-color: #ccc9bc;
}
.spin {
    flex: 1;
    min-width: 0;
    display: flex;
    height: 13px;
    border: 1px solid #7f9db9;
    background: #fff;
}
.spin input {
    flex: 1;
    min-width: 0;
    width: 0;
    padding-left: 3px;
}
.spin button {
    width: 10px;
    background: #c4d4f8;
    color: #234;
    font-weight: bold;
}
.spin.off, .spin.off button {
    background: #deddd2;
    border-color: #b8c0c4;
    color: #aaa99c;
}
.combo {
    position: relative;
    height: 14px;
    border: 1px solid #7f9db9;
    background: #fff;
}
.combo select {
    display: block;
    appearance: none;
    width: 100%;
    height: 100%;
    padding-left: 2px;
    opacity: 1;
}
.combo::after {
    content: "";
    position: absolute;
    right: 4px;
    top: 2px;
    width: 6px;
    height: 6px;
    border: solid #345;
    border-width: 0 2px 2px 0;
    transform: rotate(45deg);
}
.combo.off {
    background: #e9e8da;
    border-color: #ccc9bc;
    color: #aaa99c;
}
.combo.off::after {
    border-color: #bbb;
}
.actions {
    display: flex;
    align-items: center;
    padding: 8px 0;
    margin-bottom: 8px;
    border-bottom: 1px solid #bab7a8;
}
.actions button {
    height: 14px;
    border: 1px solid #34587c;
    border-radius: 2px;
    background: #f6f5f0;
}
.actions .ask {
    width: 14px;
    margin-right: auto;
    font-weight: bold;
}
.actions .wide {
    width: 53px;
    margin-right: 5px;
}
.actions .less {
    width: 17px;
}
.dialog .start-from fieldset {
    padding-top: 4px;
    padding-bottom: 5px;
}
.start-from .row {
    height: 17px;
    gap: 6px;
}
.dialog .radios {
    grid-template-columns: 87px minmax(0, 1fr);
    gap: 3px;
    margin-top: 5px;
}
.dialog .radios fieldset {
    gap: 4px;
    padding: 5px 5px 1px;
}
.radios label {
    display: flex;
    align-items: center;
    gap: 2px;
    height: 12px;
}
.radios .off {
    color: #aaa99c;
}
input[type=radio] {
    appearance: none;
    width: 9px;
    height: 9px;
    border: 1px solid #34587c;
    border-radius: 50%;
    background: #fff;
}
input[type=radio]:checked {
    background: radial-gradient(#21a121 1px, #fff 3px);
}
input[type=radio]:disabled {
    border-color: #ccc9bc;
    background: none;
}
.glow {
    position: absolute;
    left: 48px;
    top: 166px;
    mix-blend-mode: multiply;
    pointer-events: none;
}
.mark-ok {
    position: absolute;
    left: 50px;
    top: 185px;
    pointer-events: none;
}

/* status and task bars */
.status {
    display: flex;
    align-items: center;
    height: 14px;
    padding: 2px 12px 0 1px;
    background: linear-gradient(#efefec, #b4b2a8);
}
.status span:first-child {
    flex: 1;
}
.num {
    width: 27px;
    padding-left: 3px;
}
.meter {
    width: 13px;
    height: 9px;
    background: linear-gradient(90deg, #0a8a0a 4px, #111 4px);
}
.taskbar {
    display: flex;
    align-items: center;
    height: 21px;
    background: linear-gradient(#3a80f0, #2058d8 20%, #1f58d6 80%, #1a44b0);
    color: #fff;
}
.start {
    display: flex;
    align-items: center;
    gap: 3px;
    width: 72px;
    height: 100%;
    padding-left: 7px;
    margin-right: 7px;
    border-radius: 0 7px 7px 0;
    background: linear-gradient(#5cb85c, #3a963a 30%, #378f37 80%, #256825);
    font: italic bold 12px "Liberation Sans";
}
.task {
    display: flex;
    align-items: center;
    gap: 2px;
    width: 112px;
    height: 17px;
    padding-left: 6px;
    background: #1a48ae;
}
.lang {
    margin-left: auto;
    margin-right: 3px;
}
.tray {
    display: flex;
    align-items: center;
    gap: 7px;
    height: 100%;
    width: 84px;
    background: linear-gradient(90deg, transparent 7px, #1290e8 7px);
}
```
